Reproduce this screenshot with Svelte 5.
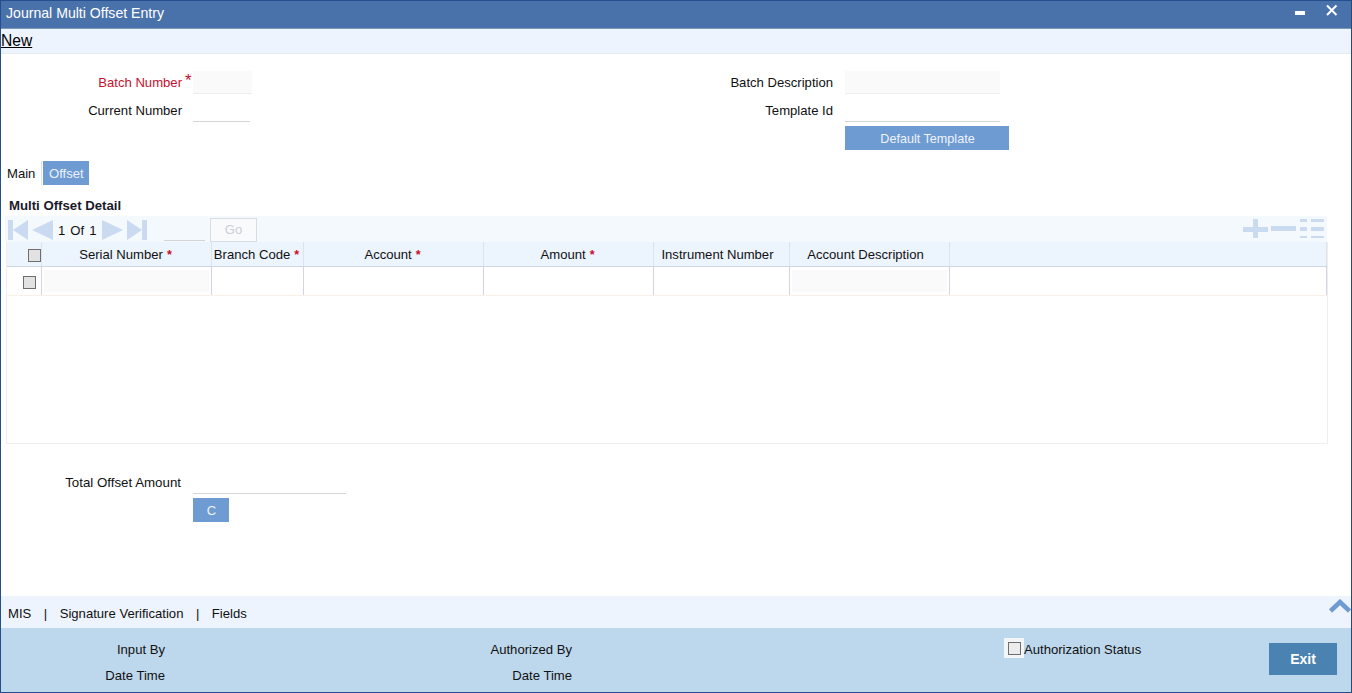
<script>
  const columns = [
    { label: 'Serial Number', req: true, w: 170, fill: true },
    { label: 'Branch Code', req: true, w: 92 },
    { label: 'Account', req: true, w: 180 },
    { label: 'Amount', req: true, w: 170 },
    { label: 'Instrument Number', w: 136, shift: true },
    { label: 'Account Description', w: 160, fill: true, shift: true }
  ];
</script>

<div class="window">
  <header class="title">
    <span>Journal Multi Offset Entry</span>
    <div class="winctl">
      <svg width="10" height="4" viewBox="0 0 10 4" class="min"><rect x="0" y="0" width="10" height="4" fill="#fff"/></svg>
      <svg width="13" height="13" viewBox="0 0 13 13" class="close"><path d="M2 1.500 11.500 11M11.500 1.500 2 11" stroke="#fff" stroke-width="2"/></svg>
    </div>
  </header>
  <div class="toolbar"><span class="new">New</span></div>

  <main class="form">
    <section class="head">
      <div class="field">
        <span class="lab red">Batch Number</span><span class="bigstar">*</span>
        <span class="inp shaded batch"></span>
      </div>
      <div class="field right">
        <span class="lab rlab">Batch Description</span>
        <span class="inp shaded desc"></span>
      </div>
      <div class="field">
        <span class="lab">Current Number</span><span class="bigstar"></span>
        <span class="inp current"></span>
      </div>
      <div class="field right">
        <span class="lab rlab">Template Id</span>
        <span class="inp desc"></span>
      </div>
      <div></div>
      <div class="right btnrow"><span class="btn deft">Default Template</span></div>
    </section>

    <nav class="tabs">
      <span class="tab">Main</span>
      <span class="tab active">Offset</span>
    </nav>

    <h2>Multi Offset Detail</h2>

    <div class="pager">
      <svg width="146" height="22" viewBox="0 0 146 22" class="arrows">
        <g fill="#c9daf1">
          <rect x="0" y="1" width="5" height="20"/><path d="M20 1v20L5 11z"/>
          <path d="M45 1v20L24 11z"/>
          <path d="M94 1v20l21-10z"/>
          <path d="M119 1v20l15-10z"/><rect x="134" y="1" width="5" height="20"/>
        </g>
      </svg>
      <span class="pagetext"><span>1</span><span>Of</span><span>1</span></span>
      <span class="pageinp"></span>
      <span class="go">Go</span>
      <svg width="82" height="20" viewBox="0 0 82 20" class="rowtools">
        <g fill="#c9daf1">
          <path d="M10 0h5v8h10v5H15v6h-5v-6H0V8h10z"/>
          <rect x="28" y="7" width="25" height="5"/>
          <rect x="57" y="0" width="7" height="3"/><rect x="68" y="0" width="13" height="3"/>
          <rect x="57" y="8" width="7" height="4"/><rect x="68" y="8" width="13" height="4"/>
          <rect x="57" y="17" width="7" height="2"/><rect x="68" y="17" width="13" height="2"/>
        </g>
      </svg>
    </div>

    <div class="grid">
      <div class="row thead">
        <div class="cell chk"><span class="box hbox"></span></div>
        {#each columns as c}
          <div class="cell" class:shift={c.shift} style="width:{c.w}px">{c.label}{#if c.req}<span class="star">*</span>{/if}</div>
        {/each}
        <div class="cell rest"></div>
      </div>
      <div class="row tbody">
        <div class="cell chk"><span class="box"></span></div>
        {#each columns as c}
          <div class="cell" style="width:{c.w}px">{#if c.fill}<span class="filled"></span>{/if}</div>
        {/each}
        <div class="cell rest"></div>
      </div>
    </div>

    <div class="total">
      <span class="lab">Total Offset Amount</span>
      <span class="inp amount"></span>
    </div>
    <span class="btn cbtn">C</span>
  </main>

  <div class="links">
    <span>MIS</span><span class="sep">|</span><span>Signature Verification</span><span class="sep">|</span><span>Fields</span>
    <svg width="24" height="14" viewBox="0 0 24 14" class="up"><path d="M2.500 12 12 3l9.500 9" fill="none" stroke="#6f9bd3" stroke-width="4.500"/></svg>
  </div>

  <footer class="audit">
    <div class="col c1"><span>Input By</span><span>Date Time</span></div>
    <div class="col c2"><span>Authorized By</span><span>Date Time</span></div>
    <div class="auth"><span class="boxwrap"><span class="box white"></span></span><span class="authtext">Authorization Status</span></div>
    <span class="exit">Exit</span>
  </footer>
</div>

<style>
  :global(body) { margin: 0; background: #fff; }
  .window {
    box-sizing: border-box; width: 1352px; height: 693px; display: flex; flex-direction: column;
    border: 1px solid #234f8e; border-right-color: #2a4a70; background: #fff; overflow: hidden;
    font: 13.1px/16px "Liberation Sans", Arial, sans-serif; color: #111;
  }
  .title {
    height: 28px; flex: none; box-sizing: border-box; background: #4a72aa; color: #fff; display: flex; align-items: center;
    justify-content: space-between; padding: 0 13px 3px 5px; border-bottom: 1px solid #7a97b8; font-size: 14.1px;
  }
  .winctl { display: flex; align-items: flex-start; gap: 20px; height: 27px; margin-top: 3px; }
  .min { margin-top: 10px; }
  .close { margin-top: 3px; }
  .toolbar {
    height: 25px; flex: none; box-sizing: border-box; background: #edf4fe; border-bottom: 1px solid #e6e9ee;
    display: flex; align-items: center;
  }
  .new { font-size: 15.6px; text-decoration: underline; color: #000; }
  .form { flex: 1; padding: 17px 0 0 0; min-height: 0; }
  .head { display: grid; grid-template-columns: 644px 1fr; grid-auto-rows: 28px; height: 90px; }
  .field { display: flex; align-items: flex-start; height: 28px; }
  .lab { display: block; width: 181px; text-align: right; padding-top: 4px; box-sizing: border-box; }
  .rlab { width: 188px; }
  .red { color: #c8102e; }
  .bigstar { width: 11px; color: #c8102e; font-size: 17px; line-height: 14px; padding: 3px 0 0 3px; box-sizing: border-box; }
  .inp { display: block; box-sizing: border-box; height: 23px; border-bottom: 1px solid #d4d4d4; }
  .shaded { background: #fafafa; border-bottom-color: #eee; }
  .batch { width: 59px; }
  .current { width: 57px; }
  .desc { width: 155px; margin-left: 12px; }
  .btnrow { padding: 0 0 0 200px; }
  .btn {
    display: flex; align-items: center; justify-content: center; background: #6f9bd3;
    color: #eef3fa; font-size: 13px; height: 24px; box-sizing: border-box; padding: 1px 0 0 1px;
  }
  .deft { width: 164px; margin-top: -1px; font-size: 12.6px; padding-top: 2px; }
  .tabs { display: flex; align-items: stretch; height: 24px; }
  .tab { display: flex; align-items: center; padding: 2px 6px 0; box-sizing: content-box; height: 22px; }
  .tab:first-child { width: 28px; border-right: 1px solid #dde3ea; margin-right: 1px; }
  .active { background: #6f9bd3; color: #eaf1fa; width: 34px; }
  h2 { margin: 0; padding: 13px 0 0 8px; font-size: 13.2px; line-height: 16px; font-weight: 700; height: 18px; color: #1a1a2a; }
  .pager {
    margin-left: 4px; width: 1322px; height: 26px; background: #f4f9fe; display: flex; align-items: center;
    box-sizing: border-box; padding: 2px 0 0 3px; position: relative;
  }
  .arrows { position: absolute; left: 3px; top: 3px; }
  .pagetext { position: absolute; left: 53px; top: 7px; display: flex; gap: 5px; }
  .pageinp { position: absolute; left: 159px; top: 2px; width: 41px; height: 23px; border-bottom: 1px solid #d4d4d4; box-sizing: border-box; }
  .go {
    position: absolute; left: 205px; top: 2px; width: 45px; height: 22px; border: 1px solid #d8dde4; background: #f8fafc;
    color: #c9ced6; display: flex; align-items: center; justify-content: center; font-size: 13px;
  }
  .rowtools { position: absolute; left: 1238px; top: 3px; }
  .grid {
    margin-left: 5px; width: 1322px; height: 202px; box-sizing: border-box; border: 1px solid #eee; border-top: 0;
  }
  .row { display: flex; box-sizing: border-box; }
  .thead { height: 25px; background: #ecf4fe; border-bottom: 1px solid #cbd6e5; }
  .tbody { height: 29px; border-bottom: 1px solid #f8efe6; }
  .cell {
    box-sizing: border-box; display: flex; align-items: center; justify-content: center; border-right: 1px solid #dce3ec;
    white-space: nowrap; padding: 1px 4px 0 2px; position: relative; flex: none;
  }
  .cell.shift { padding-right: 10px; }
  .tbody .cell { border-right-color: #cfd6e2; }
  .cell.chk { width: 35px; justify-content: flex-start; padding: 0; }
  .cell.rest { flex: 1; }
  .star { color: #c8102e; margin-left: 4px; font-size: 12.5px; font-weight: 700; }
  .filled { position: absolute; inset: 3px 2px 3px 2px; background: #fafafa; }
  .box {
    display: block; box-sizing: border-box; width: 13px; height: 13px; background: #e2e2e2; border: 1px solid #6e6e6e;
  }
  .hbox { margin-left: 21px; margin-top: 2px; }
  .tbody .chk .box { margin-left: 16px; margin-top: 3px; }
  .total { display: flex; height: 24px; margin-top: 28px; }
  .total .lab { width: 180px; padding-top: 3px; font-size: 13.3px; }
  .amount { width: 153px; margin-left: 12px; margin-top: -1px; }
  .cbtn { width: 36px; margin: 2px 0 0 192px; }
  .links {
    height: 32px; flex: none; background: #edf4fd; display: flex; align-items: center; padding: 3px 0 0 7px; position: relative; box-sizing: border-box;
  }
  .sep { margin: 0 12.500px; }
  .up { position: absolute; right: -1px; top: 3px; }
  .audit { height: 64px; flex: none; background: #bdd7ec; position: relative; display: flex; }
  .col { display: flex; flex-direction: column; align-items: flex-end; gap: 10px; padding-top: 14px; }
  .c1 { width: 164px; }
  .c2 { width: 407px; }
  .auth { position: absolute; left: 1003px; top: 10px; display: flex; align-items: center; }
  .authtext { padding-top: 3px; }
  .boxwrap { width: 20px; height: 20px; background: #f3f6f9; display: flex; align-items: center; justify-content: center; }
  .white { background: #ececec; }
  .exit {
    position: absolute; left: 1268px; top: 15px; width: 68px; height: 32px; background: #4a83b2; color: #fff;
    display: flex; align-items: center; justify-content: center; font-weight: 700; font-size: 14px;
  }
</style>
